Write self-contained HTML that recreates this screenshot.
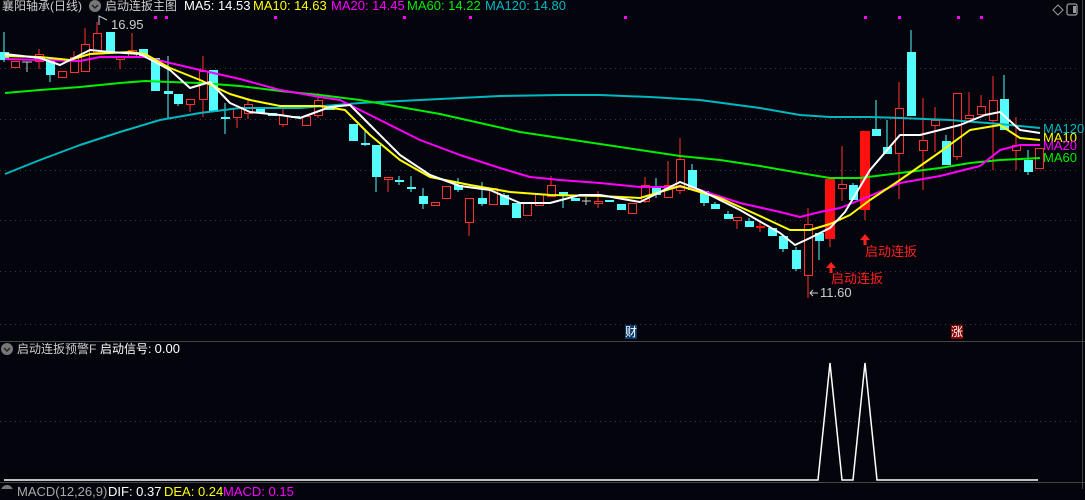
<!DOCTYPE html>
<html><head><meta charset="utf-8"><style>
html,body{margin:0;padding:0;background:#04040c;}
body{width:1085px;height:489px;overflow:hidden;position:relative;font-family:"Liberation Sans","Noto Sans CJK SC",sans-serif;}
.t{position:absolute;font-size:13px;white-space:nowrap;line-height:16px;}
.c{font-size:12px;}
</style></head><body>
<svg width="1085" height="489" style="position:absolute;left:0;top:0" xmlns="http://www.w3.org/2000/svg">
<g stroke="#3a3a44" stroke-dasharray="1,4" stroke-width="1">
<line x1="0" y1="68.5" x2="1080" y2="68.5"/><line x1="0" y1="119.5" x2="1080" y2="119.5"/>
<line x1="0" y1="170.5" x2="1080" y2="170.5"/><line x1="0" y1="220.5" x2="1080" y2="220.5"/>
<line x1="0" y1="271.5" x2="1080" y2="271.5"/><line x1="0" y1="324.5" x2="1080" y2="324.5"/>
<line x1="0" y1="421.5" x2="1080" y2="421.5"/>
</g>
<line x1="0" y1="341.5" x2="1085" y2="341.5" stroke="#444" stroke-width="1"/>
<line x1="0" y1="482.5" x2="1085" y2="482.5" stroke="#444" stroke-width="1"/>
<line x1="1082.5" y1="0" x2="1082.5" y2="489" stroke="#444"/>
<g fill="#ff00ff">
<rect x="154" y="16" width="3" height="3"/><rect x="165" y="16" width="3" height="3"/><rect x="274" y="16" width="3" height="3"/><rect x="403" y="16" width="3" height="3"/><rect x="469" y="16" width="3" height="3"/><rect x="624" y="16" width="3" height="3"/><rect x="864" y="16" width="3" height="3"/><rect x="898" y="16" width="3" height="3"/><rect x="957" y="16" width="3" height="3"/><rect x="980" y="16" width="3" height="3"/>
</g>
<path d="M1053 10 L1058 5 L1063 10 L1058 15Z" fill="none" stroke="#999"/>
<rect x="1067" y="4" width="10" height="11" rx="2" fill="none" stroke="#999" stroke-width="1.3"/><rect x="1073" y="6" width="3" height="7" fill="#999"/>
<g stroke-width="1">
<g stroke="#54fcfc">
<line x1="4" y1="32" x2="4" y2="62"/><line x1="50" y1="59" x2="50" y2="82"/><line x1="168" y1="56" x2="168" y2="119"/><line x1="178" y1="94" x2="178" y2="106"/><line x1="225" y1="103" x2="225" y2="134"/><line x1="365" y1="131" x2="365" y2="146"/><line x1="376" y1="145" x2="376" y2="192"/><line x1="399" y1="176" x2="399" y2="185"/><line x1="411" y1="176" x2="411" y2="192"/><line x1="423" y1="188" x2="423" y2="209"/><line x1="458" y1="178" x2="458" y2="192"/><line x1="482" y1="182" x2="482" y2="206"/><line x1="504" y1="193" x2="504" y2="205"/><line x1="563" y1="192" x2="563" y2="208"/><line x1="656" y1="178" x2="656" y2="198"/><line x1="692" y1="164" x2="692" y2="190"/><line x1="704" y1="191" x2="704" y2="206"/><line x1="715" y1="202" x2="715" y2="209"/><line x1="728" y1="211" x2="728" y2="219"/><line x1="749" y1="218" x2="749" y2="227"/><line x1="783" y1="236" x2="783" y2="252"/><line x1="796" y1="247" x2="796" y2="271"/><line x1="819" y1="233" x2="819" y2="260"/><line x1="853" y1="183" x2="853" y2="200"/><line x1="876" y1="100" x2="876" y2="136"/><line x1="887" y1="120" x2="887" y2="154"/><line x1="911" y1="30" x2="911" y2="116"/><line x1="946" y1="135" x2="946" y2="165"/><line x1="1004" y1="75" x2="1004" y2="130"/><line x1="1028" y1="150" x2="1028" y2="175"/>
</g>
<g stroke="#ff3232">
<line x1="39" y1="49" x2="39" y2="69"/><line x1="74" y1="51" x2="74" y2="72"/><line x1="85" y1="28" x2="85" y2="72"/><line x1="97" y1="22" x2="97" y2="54"/><line x1="120" y1="56" x2="120" y2="69"/><line x1="132" y1="33" x2="132" y2="58"/><line x1="190" y1="99" x2="190" y2="112"/><line x1="203" y1="56" x2="203" y2="117"/><line x1="237" y1="108" x2="237" y2="128"/><line x1="248" y1="98" x2="248" y2="119"/><line x1="283" y1="108" x2="283" y2="127"/><line x1="318" y1="93" x2="318" y2="118"/><line x1="388" y1="177" x2="388" y2="192"/><line x1="469" y1="198" x2="469" y2="236"/><line x1="551" y1="176" x2="551" y2="196"/><line x1="598" y1="191" x2="598" y2="208"/><line x1="645" y1="177" x2="645" y2="203"/><line x1="668" y1="161" x2="668" y2="197"/><line x1="680" y1="138" x2="680" y2="194"/><line x1="737" y1="217" x2="737" y2="229"/><line x1="760" y1="221" x2="760" y2="232"/><line x1="808" y1="208" x2="808" y2="298"/><line x1="830" y1="179" x2="830" y2="247"/><line x1="842" y1="146" x2="842" y2="201"/><line x1="865" y1="131" x2="865" y2="220"/><line x1="899" y1="82" x2="899" y2="199"/><line x1="923" y1="98" x2="923" y2="190"/><line x1="935" y1="107" x2="935" y2="152"/><line x1="957" y1="93" x2="957" y2="160"/><line x1="969" y1="92" x2="969" y2="118"/><line x1="981" y1="95" x2="981" y2="114"/><line x1="993" y1="76" x2="993" y2="170"/><line x1="1016" y1="117" x2="1016" y2="170"/>
</g>
</g>
<g fill="#54fcfc">
<rect x="0" y="52" width="9" height="8"/><rect x="46" y="59" width="9" height="16"/><rect x="106" y="32" width="9" height="21"/><rect x="139" y="49" width="9" height="8"/><rect x="151" y="58" width="9" height="33"/><rect x="164" y="91" width="9" height="3"/><rect x="174" y="94" width="9" height="10"/><rect x="209" y="70" width="9" height="42"/><rect x="221" y="117" width="9" height="2"/><rect x="256" y="108" width="9" height="5"/><rect x="268" y="113" width="9" height="3"/><rect x="291" y="116" width="9" height="2"/><rect x="326" y="106" width="9" height="4"/><rect x="349" y="124" width="9" height="17"/><rect x="361" y="143" width="9" height="2"/><rect x="372" y="145" width="9" height="32"/><rect x="395" y="180" width="9" height="2"/><rect x="407" y="187" width="9" height="2"/><rect x="419" y="196" width="9" height="8"/><rect x="454" y="185" width="9" height="5"/><rect x="478" y="198" width="9" height="6"/><rect x="500" y="195" width="9" height="10"/><rect x="512" y="203" width="9" height="15"/><rect x="559" y="192" width="9" height="4"/><rect x="571" y="198" width="9" height="3"/><rect x="605" y="200" width="9" height="2"/><rect x="617" y="204" width="9" height="6"/><rect x="652" y="186" width="9" height="9"/><rect x="688" y="170" width="9" height="20"/><rect x="700" y="191" width="9" height="12"/><rect x="711" y="204" width="9" height="5"/><rect x="724" y="214" width="9" height="5"/><rect x="745" y="221" width="9" height="6"/><rect x="768" y="228" width="9" height="8"/><rect x="779" y="236" width="9" height="13"/><rect x="792" y="250" width="9" height="19"/><rect x="815" y="233" width="9" height="8"/><rect x="849" y="185" width="9" height="15"/><rect x="872" y="129" width="9" height="7"/><rect x="883" y="147" width="9" height="7"/><rect x="907" y="52" width="9" height="64"/><rect x="942" y="141" width="9" height="24"/><rect x="1000" y="99" width="9" height="31"/><rect x="1024" y="160" width="9" height="12"/>
</g>
<g fill="#04040c" stroke="#ff3232" stroke-width="1">
<rect x="11.5" y="61.5" width="8" height="6"/><rect x="35.5" y="54.5" width="8" height="7"/><rect x="58.5" y="71.5" width="8" height="6"/><rect x="70.5" y="57.5" width="8" height="15"/><rect x="81.5" y="44.5" width="8" height="27"/><rect x="93.5" y="33.5" width="8" height="19"/><rect x="116.5" y="56.5" width="8" height="3"/><rect x="128.5" y="50.5" width="8" height="6"/><rect x="186.5" y="99.5" width="8" height="5"/><rect x="199.5" y="71.5" width="8" height="28"/><rect x="233.5" y="108.5" width="8" height="9"/><rect x="244.5" y="104.5" width="8" height="9"/><rect x="279.5" y="115.5" width="8" height="9"/><rect x="302.5" y="116.5" width="8" height="9"/><rect x="314.5" y="100.5" width="8" height="15"/><rect x="384.5" y="177.5" width="8" height="2"/><rect x="431.5" y="202.5" width="8" height="3"/><rect x="442.5" y="186.5" width="8" height="12"/><rect x="465.5" y="198.5" width="8" height="24"/><rect x="489.5" y="188.5" width="8" height="16"/><rect x="523.5" y="203.5" width="8" height="12"/><rect x="535.5" y="194.5" width="8" height="11"/><rect x="547.5" y="185.5" width="8" height="11"/><rect x="594.5" y="201.5" width="8" height="2"/><rect x="628.5" y="203.5" width="8" height="10"/><rect x="641.5" y="185.5" width="8" height="16"/><rect x="664.5" y="185.5" width="8" height="12"/><rect x="676.5" y="159.5" width="8" height="31"/><rect x="733.5" y="217.5" width="8" height="3"/><rect x="804.5" y="224.5" width="8" height="51"/><rect x="838.5" y="184.5" width="8" height="4"/><rect x="895.5" y="108.5" width="8" height="45"/><rect x="919.5" y="140.5" width="8" height="10"/><rect x="931.5" y="120.5" width="8" height="5"/><rect x="953.5" y="93.5" width="8" height="63"/><rect x="965.5" y="115.5" width="8" height="3"/><rect x="977.5" y="106.5" width="8" height="8"/><rect x="989.5" y="100.5" width="8" height="20"/><rect x="1012.5" y="145.5" width="8" height="5"/><rect x="1035.5" y="148.5" width="8" height="20"/>
</g>
<g fill="#ff1010"><rect x="825" y="179" width="10" height="60"/><rect x="860" y="131" width="10" height="79"/><rect x="756" y="226" width="9" height="2"/></g>
<g stroke="#ccc"><line x1="22" y1="62" x2="32" y2="62"/><line x1="27" y1="62" x2="27" y2="72"/><line x1="582" y1="201" x2="591" y2="201"/><line x1="586" y1="197" x2="586" y2="205"/></g>
<g fill="none" stroke-width="2" stroke-linejoin="round">
<polyline stroke="#00b8c0" points="5,174 40,160 80,145 120,132 160,120 200,113 240,108 300,108 360,103 420,100 500,96 560,95 600,95 650,97 700,100 760,108 800,115 830,117 870,117 900,118 950,120 1000,124 1040,128"/>
<polyline stroke="#00ee00" points="5,93 40,90 80,87 120,83 145,81 170,82 200,83 240,86 280,91 320,95 360,100 400,107 440,114 480,123 520,132 560,138 600,144 640,150 680,156 720,160 760,166 800,173 830,178 860,178 900,173 940,168 970,163 1000,160 1040,158"/>
<polyline stroke="#ff00ff" points="5,59 40,60 80,61 100,57 130,57 145,57 170,63 200,70 240,79 280,90 320,97 340,100 380,120 420,140 460,155 500,168 530,177 560,180 600,183 640,187 680,187 700,190 740,203 780,212 800,217 820,212 840,208 870,196 900,183 940,176 980,166 1000,150 1020,145 1040,145"/>
<polyline stroke="#ffff00" points="5,56 40,57 70,60 90,54 130,52 145,54 170,68 200,80 230,94 250,100 280,106 320,106 345,110 370,135 400,160 430,177 470,185 510,192 550,195 600,196 640,198 680,186 720,198 760,216 790,230 810,230 830,224 850,215 870,200 900,180 940,152 970,130 1000,125 1020,138 1040,140"/>
<polyline stroke="#ffffff" points="5,54 40,58 60,65 90,50 110,52 140,54 170,70 190,88 210,82 230,103 250,112 280,115 300,118 330,107 350,105 370,125 400,155 430,175 460,186 490,190 520,203 550,203 580,195 600,195 640,202 680,182 700,190 740,210 780,233 795,245 810,238 830,228 845,212 870,170 900,135 920,135 940,130 960,125 985,115 1000,112 1020,130 1040,133"/>
</g>
<g fill="#ff2020"><path d="M831 262 L826 268 L829.5 268 L829.5 273 L832.5 273 L832.5 268 L836 268Z"/><path d="M865 234 L860 240 L863.5 240 L863.5 245 L866.5 245 L866.5 240 L870 240Z"/></g>
<path d="M99 25 L99 16 L103 18 L107 20" fill="none" stroke="#ccc"/>
<path d="M818 293 L810 293 M813 290 L810 293 L813 296" fill="none" stroke="#ccc"/>
<rect x="625" y="325" width="12" height="14" fill="#0a3a6a"/><rect x="951" y="325" width="12" height="14" fill="#8a0000"/>
<polyline fill="none" stroke="#fff" stroke-width="1.5" points="4,480 818,480 830,363 842,480 853,480 865,363 877,480 1038,480"/>
<circle cx="95" cy="6" r="6" fill="#777"/><path d="M92 5 L95 8 L98 5" fill="none" stroke="#222" stroke-width="1.5"/>
<circle cx="7" cy="349" r="6" fill="#777"/><path d="M4 348 L7 351 L10 348" fill="none" stroke="#222" stroke-width="1.5"/>
<circle cx="7" cy="491" r="6" fill="#777"/>
</svg>
<div class="t c" style="left:2px;top:-2px;color:#ccc">襄阳轴承(日线)</div>
<div class="t c" style="left:105px;top:-2px;color:#ccc">启动连扳主图</div>
<div class="t" style="left:184px;top:-2px;color:#fff">MA5: 14.53</div>
<div class="t" style="left:253px;top:-2px;color:#ffff00">MA10: 14.63</div>
<div class="t" style="left:331px;top:-2px;color:#ff00ff">MA20: 14.45</div>
<div class="t" style="left:407px;top:-2px;color:#00ee00">MA60: 14.22</div>
<div class="t" style="left:485px;top:-2px;color:#00b8c0">MA120: 14.80</div>
<div class="t" style="left:111px;top:17px;color:#ccc">16.95</div>
<div class="t" style="left:820px;top:285px;color:#ccc">11.60</div>
<div class="t" style="left:831px;top:271px;color:#ff2020">启动连扳</div>
<div class="t" style="left:865px;top:244px;color:#ff2020">启动连扳</div>
<div class="t" style="left:1043px;top:121px;color:#00b8c0">MA120</div>
<div class="t" style="left:1043px;top:130px;color:#ffff00">MA10</div>
<div class="t" style="left:1043px;top:138px;color:#ff00ff">MA20</div>
<div class="t" style="left:1043px;top:150px;color:#00ee00">MA60</div>
<div class="t" style="left:625px;top:324px;color:#fff;font-size:12px">财</div>
<div class="t" style="left:951px;top:324px;color:#fff;font-size:12px">涨</div>
<div class="t c" style="left:17px;top:341px;color:#ccc">启动连扳预警F</div>
<div class="t c" style="left:100px;top:341px;color:#fff">启动信号: <span style="font-size:13px">0.00</span></div>
<div class="t" style="left:17px;top:484px;color:#aaa">MACD(12,26,9)</div>
<div class="t" style="left:108px;top:484px;color:#fff">DIF: 0.37</div>
<div class="t" style="left:164px;top:484px;color:#ffff00">DEA: 0.24</div>
<div class="t" style="left:223px;top:484px;color:#ff00ff">MACD: 0.15</div>
</body></html>
